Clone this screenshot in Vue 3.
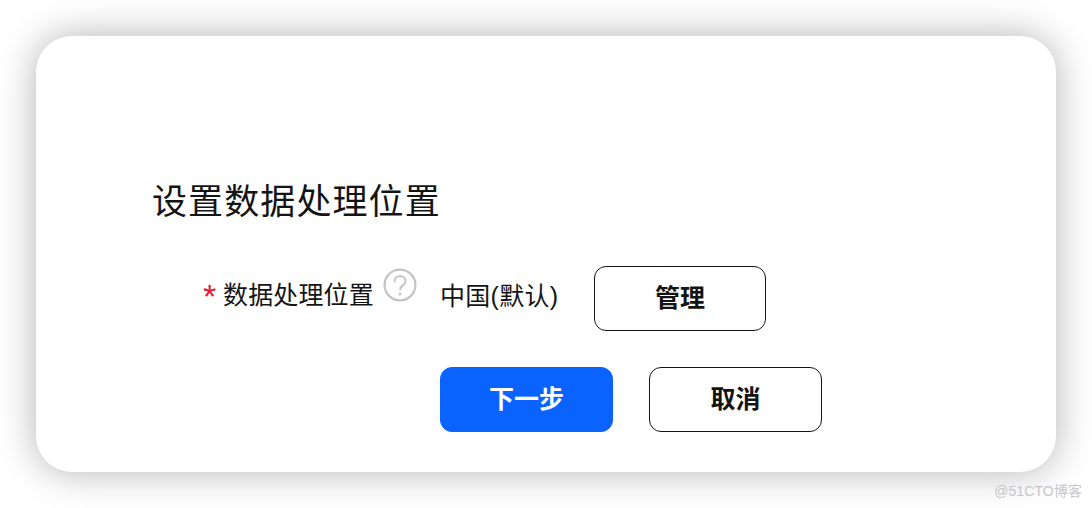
<template>
  <div class="page">
    <div class="dialog">
      <h2 class="title">设置数据处理位置</h2>

      <div class="form-row">
        <div class="label">
          <span class="required">*</span>
          <span class="label-text">数据处理位置</span>
          <svg class="help" viewBox="0 0 34 34" width="34" height="34">
            <circle cx="17" cy="17" r="15.4" fill="none" stroke="#c4c4c4" stroke-width="2.2" />
            <path d="M11.6 13.4c0-3.2 2.4-5.3 5.5-5.3s5.4 2 5.4 4.8c0 2.2-1.2 3.3-2.8 4.5-1.5 1.1-2.4 2-2.4 4" fill="none" stroke="#c4c4c4" stroke-width="2" stroke-linecap="round" />
            <circle cx="17.1" cy="26" r="1.5" fill="#c4c4c4" />
          </svg>
        </div>
        <span class="value">中国(默认)</span>
        <button class="btn btn-manage">管理</button>
      </div>

      <div class="actions">
        <button class="btn btn-primary">下一步</button>
        <button class="btn">取消</button>
      </div>
    </div>
    <span class="watermark">@51CTO博客</span>
  </div>
</template>

<script setup>
</script>

<style>
html, body {
  margin: 0;
  background: #fff;
}
</style>

<style scoped>
.page {
  position: relative;
  width: 1092px;
  height: 508px;
  padding: 36px;
  box-sizing: border-box;
  overflow: hidden;
  background: #fff;
  font-family: "Liberation Sans", "Noto Sans CJK SC", sans-serif;
  color: #141414;
}

.dialog {
  height: 436px;
  box-sizing: border-box;
  padding: 0 0 40px 117px;
  display: flex;
  flex-direction: column;
  justify-content: flex-end;
  background: #fff;
  border-radius: 36px;
  box-shadow: 0 0 38px rgba(0, 0, 0, 0.3);
}

.title {
  margin: 0 0 40px -1px;
  font-size: 35px;
  line-height: 49px;
  font-weight: 400;
  letter-spacing: 1.1px;
}

.form-row {
  display: flex;
  align-items: center;
  height: 65px;
}

.label {
  flex: none;
  width: 238px;
  height: 65px;
  margin-left: 50px;
  display: flex;
  align-items: center;
  font-size: 25px;
  white-space: nowrap;
}

.required {
  flex: none;
  width: 20px;
  color: #e6162d;
  font-size: 34px;
  line-height: 34px;
  margin-top: -5px;
}

.label-text {
  flex: none;
  line-height: 36px;
  margin-top: -8px;
  letter-spacing: 0.15px;
}

.help {
  flex: none;
  margin-left: 9px;
  margin-top: -27px;
}

.value {
  flex: none;
  width: 154px;
  margin-left: -1px;
  font-size: 25px;
  line-height: 36px;
  margin-top: -6px;
  letter-spacing: 0.3px;
}

.btn {
  width: 173px;
  height: 65px;
  box-sizing: border-box;
  padding: 0 0 5px;
  background: #fff;
  border: 1px solid #141414;
  border-radius: 12px;
  font-family: inherit;
  font-size: 25px;
  font-weight: 700;
  color: #141414;
}

.btn-manage {
  width: 172px;
}

.actions {
  display: flex;
  gap: 36px;
  margin-top: 36px;
  margin-left: 287px;
}

.btn-primary {
  background: #0a62ff;
  border-color: #0a62ff;
  color: #fff;
}

.watermark {
  position: absolute;
  right: 10px;
  bottom: 9px;
  font-size: 14px;
  line-height: 16px;
  letter-spacing: 0.1px;
  color: #c6c6c6;
}
</style>
